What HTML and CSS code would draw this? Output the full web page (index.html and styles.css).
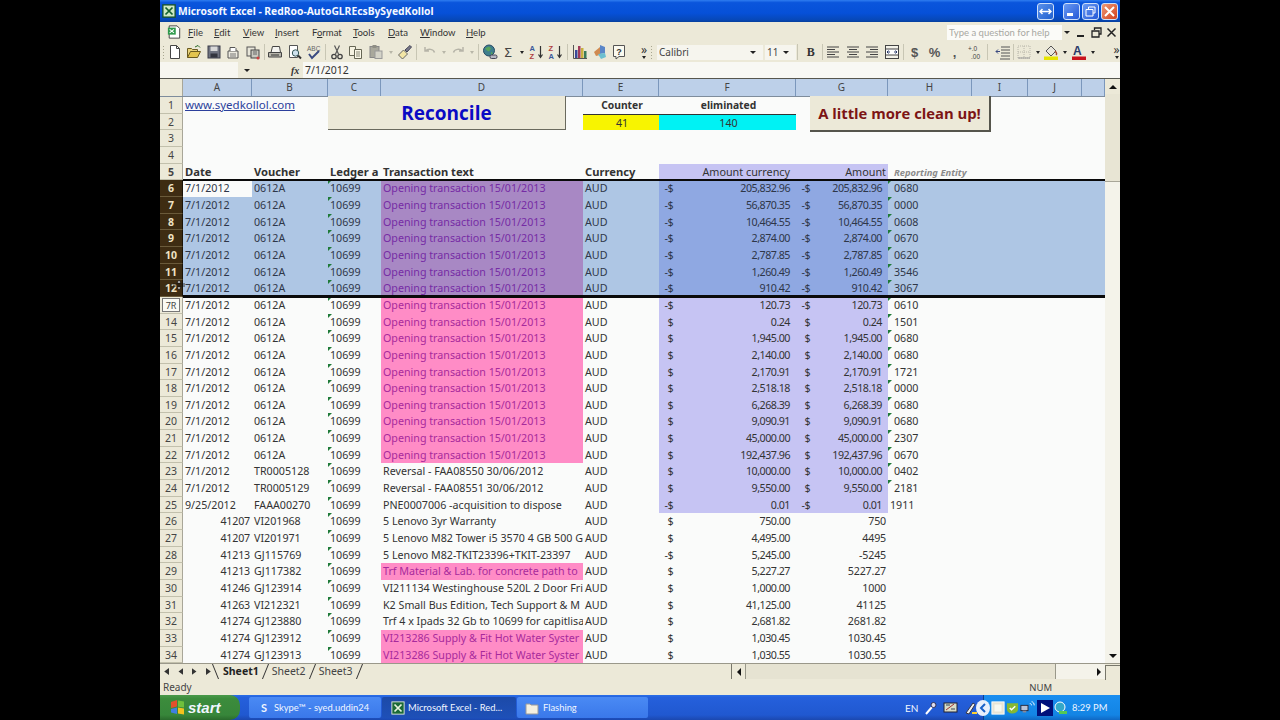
FILE: index.html
```html
<!DOCTYPE html>
<html>
<head>
    <title>Microsoft Excel - RedRoo-AutoGLREcsBySyedKollol</title>
    <link rel="stylesheet" href="styles.css">
</head>
<body>
<svg class="defs" width="0" height="0">
    <symbol id="i-xl" viewBox="0 0 16 16"><rect x="1" y="1" width="14" height="14" fill="#cfe8c4" stroke="#14502a" stroke-width="1.5"/><path d="M4 4l8 8M12 4l-8 8" stroke="#14602e" stroke-width="2"/></symbol>
    <symbol id="i-xl-dark" viewBox="0 0 16 16"><rect x="1" y="1" width="14" height="14" fill="#1b6a38" stroke="#e8f0e0"/><path d="M4 4l8 8M12 4l-8 8" stroke="#e8f4e0" stroke-width="2"/></symbol>
    <symbol id="i-doc" viewBox="0 0 16 16"><path d="M2.5 1h9l3 3v11h-12z" fill="#fff" stroke="#333"/><rect x="1" y="3" width="9" height="8" fill="#2f9a4c"/><path d="M3 5l5 4M8 5L3 9" stroke="#fff" stroke-width="1.3"/></symbol>
    <symbol id="i-new" viewBox="0 0 16 16"><path d="M3.5 1.5h6l3 3v10h-9z" fill="#fff" stroke="#444"/><path d="M9.5 1.5v3h3" fill="none" stroke="#444"/></symbol>
    <symbol id="i-open" viewBox="0 0 16 16"><path d="M1.5 13.5v-9h4l1 1h5v2" fill="#e8d27a" stroke="#6a5a20"/><path d="M1.5 13.5l3-6h10l-3 6z" fill="#e3c44e" stroke="#6a5a20"/><path d="M9 3l3-1.5 2 2" fill="none" stroke="#2a6a2a"/></symbol>
    <symbol id="i-save" viewBox="0 0 16 16"><rect x="2" y="2" width="12" height="12" fill="#6f7380" stroke="#3a3c48"/><rect x="4.5" y="2.5" width="7" height="4.5" fill="#d8d8d8"/><rect x="4.5" y="9.5" width="7" height="4" fill="#33353f"/></symbol>
    <symbol id="i-perm" viewBox="0 0 16 16"><path d="M3 7h10v7H3z" fill="#eceae0" stroke="#555"/><path d="M5 7V3.5h5l1 1V7" fill="#fff" stroke="#555"/><path d="M5 10h6M5 12h6" stroke="#777"/></symbol>
    <symbol id="i-web" viewBox="0 0 16 16"><rect x="2" y="3" width="8" height="9" fill="#e8e6da" stroke="#555"/><rect x="6" y="6" width="8" height="8" fill="#c8c8c0" stroke="#444"/><path d="M8 8h4M8 10h4" stroke="#666"/><circle cx="13" cy="14" r="1.5" fill="#d04040"/></symbol>
    <symbol id="i-print" viewBox="0 0 16 16"><path d="M1.5 8.5h13V13h-13z" fill="#b8b6ac" stroke="#444"/><path d="M4 8.5l1.5-6h7l1 6z" fill="#f4f4f0" stroke="#444"/><path d="M4 11h8" stroke="#333"/></symbol>
    <symbol id="i-prev" viewBox="0 0 16 16"><path d="M2.5 1.5h8v12h-8z" fill="#fff" stroke="#555"/><circle cx="8.5" cy="9" r="3.2" fill="#cfe2ee" stroke="#355"/><path d="M11 11.5l3 3" stroke="#333" stroke-width="2"/></symbol>
    <symbol id="i-cut" viewBox="0 0 16 16"><path d="M5.5 1.5l4 8.5M10.5 1.5l-4 8.5" stroke="#555" stroke-width="1.2"/><circle cx="5" cy="12.5" r="2.2" fill="none" stroke="#444" stroke-width="1.3"/><circle cx="11" cy="12.5" r="2.2" fill="none" stroke="#444" stroke-width="1.3"/></symbol>
    <symbol id="i-copy" viewBox="0 0 16 16"><path d="M1.5 2.5h6v9h-6z" fill="#f6f3e2" stroke="#665"/><path d="M6.5 5.5h7v9h-7z" fill="#fbf8e8" stroke="#665"/><path d="M8 8h4M8 10h4M8 12h4" stroke="#887"/></symbol>
    <symbol id="i-paste" viewBox="0 0 16 16"><rect x="2" y="2.5" width="9" height="11" fill="#a9a89c" stroke="#888"/><rect x="7" y="7" width="7" height="7.5" fill="#d4d3c8" stroke="#999"/><rect x="4.5" y="1" width="4" height="3" fill="#8f8e84"/></symbol>
    <symbol id="i-brush" viewBox="0 0 16 16"><path d="M1.5 11l5-5 4 4-5 5z" fill="#f3e6a6" stroke="#666"/><path d="M8 6l5-4.5L14.5 3 10 8z" fill="#7a7a8c" stroke="#445"/></symbol>
    <symbol id="i-undo" viewBox="0 0 16 16"><path d="M3 3v4h4M3.5 7a5 4 0 0 1 9 1.5" fill="none" stroke="#b6b4a8" stroke-width="1.5"/></symbol>
    <symbol id="i-redo" viewBox="0 0 16 16"><path d="M13 3v4H9M12.5 7a5 4 0 0 0-9 1.5" fill="none" stroke="#b6b4a8" stroke-width="1.5"/></symbol>
    <symbol id="i-link" viewBox="0 0 16 16"><circle cx="7" cy="6.5" r="5.5" fill="#3f7f8c" stroke="#274a66"/><path d="M3 4.5l4-2 2 2-2 3-2-1zM9 8l2 1-2 2z" fill="#5aa65a"/><rect x="8" y="11" width="7" height="3.5" rx="1.5" fill="#b8b8c4" stroke="#445"/></symbol>
    <symbol id="i-chart" viewBox="0 0 16 16"><path d="M1.5 1v13.5H15" fill="none" stroke="#555"/><rect x="3" y="6" width="2.5" height="8" fill="#3a4a9a"/><rect x="6" y="2" width="2.5" height="12" fill="#a03a5a"/><rect x="9" y="4" width="2.5" height="10" fill="#c8b040"/><rect x="12" y="7" width="2.5" height="7" fill="#3a7a5a"/></symbol>
    <symbol id="i-map" viewBox="0 0 16 16"><path d="M8 1l5 2v6l-5 1z" fill="#5a86c8"/><path d="M2 8l6-5v8l-4 1z" fill="#d08a50"/><path d="M6 10l7-1 1 4-5 2z" fill="#6cc0d0"/></symbol>
    <symbol id="i-left" viewBox="0 0 16 16"><path d="M2 3h12M2 5.5h8M2 8h12M2 10.5h8M2 13h12" stroke="#444"/></symbol>
    <symbol id="i-center" viewBox="0 0 16 16"><path d="M2 3h12M4 5.5h8M2 8h12M4 10.5h8M2 13h12" stroke="#444"/></symbol>
    <symbol id="i-right" viewBox="0 0 16 16"><path d="M2 3h12M6 5.5h8M2 8h12M6 10.5h8M2 13h12" stroke="#444"/></symbol>
    <symbol id="i-merge" viewBox="0 0 16 16"><rect x="1.5" y="1.5" width="13" height="13" fill="#f4f3ea" stroke="#444"/><rect x="1.5" y="5" width="13" height="6" fill="#fff" stroke="#444"/><path d="M3 8h3M13 8h-3M4.5 6.5L3 8l1.5 1.5M11.5 6.5L13 8l-1.5 1.5" fill="none" stroke="#2a3a6a"/></symbol>
    <symbol id="i-indent" viewBox="0 0 16 16"><path d="M6 3h9M6 6h9M6 9h9M6 12h9M5 15h10" stroke="#555"/><path d="M1 7.5h4M3 5.5l-2 2 2 2" fill="none" stroke="#3a4a80"/></symbol>
    <symbol id="i-border" viewBox="0 0 16 16"><rect x="2" y="2" width="12" height="12" fill="none" stroke="#b8b6aa" stroke-dasharray="1 1"/><path d="M8 2v12M2 8h12" stroke="#b8b6aa" stroke-dasharray="1 1"/><path d="M2 14h12" stroke="#999"/></symbol>
    <symbol id="i-fill" viewBox="0 0 16 16"><path d="M3 7l5-5 5 5-5 5z" fill="#e8e6dc" stroke="#555"/><path d="M12 7c2 2 2 3 1 4" fill="none" stroke="#a04a30" stroke-width="1.5"/><rect x="1" y="12.5" width="14" height="3.5" fill="#e6e400"/></symbol>
</svg>

<div class="screen">
    <div class="titlebar">
        <svg class="title-icon"><use href="#i-xl"/></svg>
        <span class="title-text">Microsoft Excel - RedRoo-AutoGLREcsBySyedKollol</span>
        <span class="win-btn win-resize"><svg width="13" height="9" viewBox="0 0 13 9"><path d="M1 4.5h11M3.5 2L1 4.5 3.5 7M9.5 2L12 4.5 9.5 7" fill="none" stroke="#fff" stroke-width="1.5"/></svg></span>
        <span class="win-btn win-min"><svg width="11" height="11" viewBox="0 0 11 11"><rect x="1" y="7" width="6" height="3" fill="#fff"/></svg></span>
        <span class="win-btn"><svg width="11" height="11" viewBox="0 0 11 11"><path d="M3.5 3V1H10v6H8M1 3.5h7V10H1z" fill="none" stroke="#fff"/></svg></span>
        <span class="win-btn win-close"><svg width="11" height="11" viewBox="0 0 11 11"><path d="M1 1l9 9M10 1l-9 9" stroke="#fff" stroke-width="2"/></svg></span>
    </div>

    <div class="menubar">
        <svg class="menu-icon"><use href="#i-doc"/></svg>
        <span class="menu m-file"><u>F</u>ile</span>
        <span class="menu m-edit"><u>E</u>dit</span>
        <span class="menu m-view"><u>V</u>iew</span>
        <span class="menu m-insert"><u>I</u>nsert</span>
        <span class="menu m-format">F<u>o</u>rmat</span>
        <span class="menu m-tools"><u>T</u>ools</span>
        <span class="menu m-data"><u>D</u>ata</span>
        <span class="menu m-window"><u>W</u>indow</span>
        <span class="menu m-help"><u>H</u>elp</span>
        <span class="help-box">Type a question for help</span>
        <span class="caret"></span>
        <span class="doc-btns">
            <svg width="11" height="11" viewBox="0 0 11 11"><rect x="1" y="8" width="7" height="2" fill="#222"/></svg>
            <svg width="11" height="11" viewBox="0 0 11 11"><path d="M3.5 3V1H10v6H8M1 4h7v6H1z" fill="none" stroke="#222" stroke-width="1.3"/></svg>
            <svg width="11" height="11" viewBox="0 0 11 11"><path d="M1.5 1.5l8 8M9.5 1.5l-8 8" stroke="#222" stroke-width="1.5"/></svg>
        </span>
    </div>

    <div class="toolbar">
        <span class="grip"></span>
        <span class="tb"><svg><use href="#i-new"/></svg></span>
        <span class="tb"><svg><use href="#i-open"/></svg></span>
        <span class="tb"><svg><use href="#i-save"/></svg></span>
        <span class="tb"><svg><use href="#i-perm"/></svg></span>
        <span class="tb"><svg><use href="#i-web"/></svg></span>
        <span class="sep"></span>
        <span class="tb"><svg><use href="#i-print"/></svg></span>
        <span class="tb"><svg><use href="#i-prev"/></svg></span>
        <span class="tb"><svg viewBox="0 0 16 16"><text x="1" y="6.5" font-size="6.5" font-family="Liberation Sans" fill="#666">ABC</text><path d="M3 10l3 4 7-7" fill="none" stroke="#3a4a80" stroke-width="2"/></svg></span>
        <span class="sep"></span>
        <span class="tb"><svg><use href="#i-cut"/></svg></span>
        <span class="tb"><svg><use href="#i-copy"/></svg></span>
        <span class="tb"><svg><use href="#i-paste"/></svg></span>
        <span class="dd dd-off"></span>
        <span class="tb"><svg><use href="#i-brush"/></svg></span>
        <span class="sep"></span>
        <span class="tb tb-sm tb-undo"><svg><use href="#i-undo"/></svg></span>
        <span class="dd dd-off"></span>
        <span class="tb tb-sm"><svg><use href="#i-redo"/></svg></span>
        <span class="dd dd-off"></span>
        <span class="sep"></span>
        <span class="tb"><svg><use href="#i-link"/></svg></span>
        <span class="tb sigma">Σ</span>
        <span class="dd"></span>
        <span class="tb"><svg viewBox="0 0 16 16"><text x="0.5" y="7" font-size="7.5" font-weight="bold" font-family="Liberation Sans" fill="#3a5a9a">A</text><text x="0.5" y="15" font-size="7.5" font-weight="bold" font-family="Liberation Sans" fill="#b04040">Z</text><path d="M11.5 2v11M9.5 10.5l2 3 2-3" fill="none" stroke="#333" stroke-width="1.2"/></svg></span>
        <span class="tb"><svg viewBox="0 0 16 16"><text x="0.5" y="7" font-size="7.5" font-weight="bold" font-family="Liberation Sans" fill="#b04040">Z</text><text x="0.5" y="15" font-size="7.5" font-weight="bold" font-family="Liberation Sans" fill="#3a5a9a">A</text><path d="M11.5 2v11M9.5 10.5l2 3 2-3" fill="none" stroke="#333" stroke-width="1.2"/></svg></span>
        <span class="sep"></span>
        <span class="tb tb-wide"><svg><use href="#i-chart"/></svg></span>
        <span class="tb"><svg><use href="#i-map"/></svg></span>
        <span class="tb"><svg viewBox="0 0 16 16"><path d="M2.5 1.5h11v11H8l-3 2.5v-2.5H2.5z" fill="#fbfaf0" stroke="#555"/><text x="5.3" y="10.5" font-size="9" font-weight="bold" font-family="Liberation Sans" fill="#333">?</text></svg></span>
        <span class="more">»</span>
        <span class="grip"></span>
        <span class="combo combo-font">Calibri<i class="caret"></i></span>
        <span class="combo combo-size">11<i class="caret"></i></span>
        <span class="sep sep-b"></span>
        <span class="tb bold-b">B</span>
        <span class="sep"></span>
        <span class="tb"><svg><use href="#i-left"/></svg></span>
        <span class="tb"><svg><use href="#i-center"/></svg></span>
        <span class="tb"><svg><use href="#i-right"/></svg></span>
        <span class="tb"><svg><use href="#i-merge"/></svg></span>
        <span class="sep"></span>
        <span class="tb sym">$</span>
        <span class="tb sym">%</span>
        <span class="tb sym">,</span>
        <span class="tb tb-dec"><svg viewBox="0 0 16 16"><text x="0" y="7" font-size="6.5" font-family="Liberation Sans" fill="#444">+.0</text><text x="3" y="15" font-size="6.5" font-family="Liberation Sans" fill="#444">.00</text></svg></span>
        <span class="sep"></span>
        <span class="tb tb-indent"><svg><use href="#i-indent"/></svg></span>
        <span class="sep sep-tight"></span>
        <span class="tb"><svg><use href="#i-border"/></svg></span>
        <span class="dd dd-n"></span>
        <span class="tb"><svg><use href="#i-fill"/></svg></span>
        <span class="dd dd-n"></span>
        <span class="tb"><svg viewBox="0 0 16 16"><text x="2" y="11" font-size="12" font-weight="bold" font-family="Liberation Sans" fill="#2a3a6a">A</text><rect x="1" y="12.5" width="14" height="3.5" fill="#c8141e"/></svg></span>
        <span class="dd dd-n"></span>
        <span class="more more-end">»</span>
    </div>

    <div class="formula">
        <span class="name-box"></span>
        <span class="caret name-caret"></span>
        <span class="fx">fx</span>
        <span class="formula-text">7/1/2012</span>
    </div>

    <div class="sheet-wrap">
        <div class="sheet">
            <div class="cols">
                <div class="corner"></div><div>A</div><div>B</div><div>C</div><div>D</div><div>E</div><div>F</div><div>G</div><div>H</div><div>I</div><div>J</div><div></div>
            </div>

            <div class="row"><div class="rh">1</div><div class="link-cell"><a>www.syedkollol.com</a></div><div></div><div></div><div class="mid strong">Counter</div><div class="mid strong">eliminated</div></div>
            <div class="row"><div class="rh">2</div><div></div><div></div><div></div><div></div><div class="mid yellow">41</div><div class="mid cyan">140</div></div>
            <div class="row"><div class="rh">3</div></div>
            <div class="row"><div class="rh">4</div></div>
            <div class="row head line"><div class="rh">5</div><div>Date</div><div>Voucher</div><div>Ledger a</div><div>Transaction text</div><div>Currency</div><div class="num-head shade">Amount currency</div><div class="num-head shade">Amount</div><div class="entity-head">Reporting Entity</div></div>

            <div class="row sel"><div class="rh">6</div><div class="active">7/1/2012</div><div>0612A</div><div class="err">10699</div><div class="pink">Opening transaction 15/01/2013</div><div>AUD</div><div class="amt shade"><span>-$</span><span>205,832.96</span></div><div class="amt shade"><span>-$</span><span>205,832.96</span></div><div class="err ent">0680</div></div>
            <div class="row sel"><div class="rh">7</div><div>7/1/2012</div><div>0612A</div><div class="err">10699</div><div class="pink">Opening transaction 15/01/2013</div><div>AUD</div><div class="amt shade"><span>-$</span><span>56,870.35</span></div><div class="amt shade"><span>-$</span><span>56,870.35</span></div><div class="err ent">0000</div></div>
            <div class="row sel"><div class="rh">8</div><div>7/1/2012</div><div>0612A</div><div class="err">10699</div><div class="pink">Opening transaction 15/01/2013</div><div>AUD</div><div class="amt shade"><span>-$</span><span>10,464.55</span></div><div class="amt shade"><span>-$</span><span>10,464.55</span></div><div class="err ent">0608</div></div>
            <div class="row sel"><div class="rh">9</div><div>7/1/2012</div><div>0612A</div><div class="err">10699</div><div class="pink">Opening transaction 15/01/2013</div><div>AUD</div><div class="amt shade"><span>-$</span><span>2,874.00</span></div><div class="amt shade"><span>-$</span><span>2,874.00</span></div><div class="err ent">0670</div></div>
            <div class="row sel"><div class="rh">10</div><div>7/1/2012</div><div>0612A</div><div class="err">10699</div><div class="pink">Opening transaction 15/01/2013</div><div>AUD</div><div class="amt shade"><span>-$</span><span>2,787.85</span></div><div class="amt shade"><span>-$</span><span>2,787.85</span></div><div class="err ent">0620</div></div>
            <div class="row sel"><div class="rh">11</div><div>7/1/2012</div><div>0612A</div><div class="err">10699</div><div class="pink">Opening transaction 15/01/2013</div><div>AUD</div><div class="amt shade"><span>-$</span><span>1,260.49</span></div><div class="amt shade"><span>-$</span><span>1,260.49</span></div><div class="err ent">3546</div></div>
            <div class="row sel line line-thick"><div class="rh">12</div><div>7/1/2012</div><div>0612A</div><div class="err">10699</div><div class="pink">Opening transaction 15/01/2013</div><div>AUD</div><div class="amt shade"><span>-$</span><span>910.42</span></div><div class="amt shade"><span>-$</span><span>910.42</span></div><div class="err ent">3067</div></div>

            <div class="row"><div class="rh"><span class="tip">7R</span></div><div>7/1/2012</div><div>0612A</div><div class="err">10699</div><div class="pink">Opening transaction 15/01/2013</div><div>AUD</div><div class="amt shade"><span>-$</span><span>120.73</span></div><div class="amt shade"><span>-$</span><span>120.73</span></div><div class="err ent">0610</div></div>
            <div class="row"><div class="rh">14</div><div>7/1/2012</div><div>0612A</div><div class="err">10699</div><div class="pink">Opening transaction 15/01/2013</div><div>AUD</div><div class="amt shade"><span>$</span><span>0.24</span></div><div class="amt shade"><span>$</span><span>0.24</span></div><div class="err ent">1501</div></div>
            <div class="row"><div class="rh">15</div><div>7/1/2012</div><div>0612A</div><div class="err">10699</div><div class="pink">Opening transaction 15/01/2013</div><div>AUD</div><div class="amt shade"><span>$</span><span>1,945.00</span></div><div class="amt shade"><span>$</span><span>1,945.00</span></div><div class="err ent">0680</div></div>
            <div class="row"><div class="rh">16</div><div>7/1/2012</div><div>0612A</div><div class="err">10699</div><div class="pink">Opening transaction 15/01/2013</div><div>AUD</div><div class="amt shade"><span>$</span><span>2,140.00</span></div><div class="amt shade"><span>$</span><span>2,140.00</span></div><div class="err ent">0680</div></div>
            <div class="row"><div class="rh">17</div><div>7/1/2012</div><div>0612A</div><div class="err">10699</div><div class="pink">Opening transaction 15/01/2013</div><div>AUD</div><div class="amt shade"><span>$</span><span>2,170.91</span></div><div class="amt shade"><span>$</span><span>2,170.91</span></div><div class="err ent">1721</div></div>
            <div class="row"><div class="rh">18</div><div>7/1/2012</div><div>0612A</div><div class="err">10699</div><div class="pink">Opening transaction 15/01/2013</div><div>AUD</div><div class="amt shade"><span>$</span><span>2,518.18</span></div><div class="amt shade"><span>$</span><span>2,518.18</span></div><div class="err ent">0000</div></div>
            <div class="row"><div class="rh">19</div><div>7/1/2012</div><div>0612A</div><div class="err">10699</div><div class="pink">Opening transaction 15/01/2013</div><div>AUD</div><div class="amt shade"><span>$</span><span>6,268.39</span></div><div class="amt shade"><span>$</span><span>6,268.39</span></div><div class="err ent">0680</div></div>
            <div class="row"><div class="rh">20</div><div>7/1/2012</div><div>0612A</div><div class="err">10699</div><div class="pink">Opening transaction 15/01/2013</div><div>AUD</div><div class="amt shade"><span>$</span><span>9,090.91</span></div><div class="amt shade"><span>$</span><span>9,090.91</span></div><div class="err ent">0680</div></div>
            <div class="row"><div class="rh">21</div><div>7/1/2012</div><div>0612A</div><div class="err">10699</div><div class="pink">Opening transaction 15/01/2013</div><div>AUD</div><div class="amt shade"><span>$</span><span>45,000.00</span></div><div class="amt shade"><span>$</span><span>45,000.00</span></div><div class="err ent">2307</div></div>
            <div class="row"><div class="rh">22</div><div>7/1/2012</div><div>0612A</div><div class="err">10699</div><div class="pink">Opening transaction 15/01/2013</div><div>AUD</div><div class="amt shade"><span>$</span><span>192,437.96</span></div><div class="amt shade"><span>$</span><span>192,437.96</span></div><div class="err ent">0670</div></div>
            <div class="row"><div class="rh">23</div><div>7/1/2012</div><div>TR0005128</div><div class="err">10699</div><div>Reversal - FAA08550 30/06/2012</div><div>AUD</div><div class="amt shade"><span>$</span><span>10,000.00</span></div><div class="amt shade"><span>$</span><span>10,000.00</span></div><div class="err ent">0402</div></div>
            <div class="row"><div class="rh">24</div><div>7/1/2012</div><div>TR0005129</div><div class="err">10699</div><div>Reversal - FAA08551 30/06/2012</div><div>AUD</div><div class="amt shade"><span>$</span><span>9,550.00</span></div><div class="amt shade"><span>$</span><span>9,550.00</span></div><div class="err ent">2181</div></div>
            <div class="row"><div class="rh">25</div><div>9/25/2012</div><div>FAAA00270</div><div class="err">10699</div><div>PNE0007006 -acquisition to dispose</div><div>AUD</div><div class="amt shade"><span>-$</span><span>0.01</span></div><div class="amt shade"><span>-$</span><span>0.01</span></div><div>1911</div></div>

            <div class="row"><div class="rh">26</div><div class="right">41207</div><div>VI201968</div><div class="err">10699</div><div>5 Lenovo 3yr Warranty</div><div>AUD</div><div class="amt"><span>$</span><span>750.00</span></div><div class="right">750</div></div>
            <div class="row"><div class="rh">27</div><div class="right">41207</div><div>VI201971</div><div class="err">10699</div><div>5 Lenovo M82 Tower i5 3570 4 GB 500 GI</div><div>AUD</div><div class="amt"><span>$</span><span>4,495.00</span></div><div class="right">4495</div></div>
            <div class="row"><div class="rh">28</div><div class="right">41213</div><div>GJ115769</div><div class="err">10699</div><div>5 Lenovo M82-TKIT23396+TKIT-23397</div><div>AUD</div><div class="amt"><span>-$</span><span>5,245.00</span></div><div class="right">-5245</div></div>
            <div class="row"><div class="rh">29</div><div class="right">41213</div><div>GJ117382</div><div class="err">10699</div><div class="pink">Trf Material &amp; Lab. for concrete path to</div><div>AUD</div><div class="amt"><span>$</span><span>5,227.27</span></div><div class="right">5227.27</div></div>
            <div class="row"><div class="rh">30</div><div class="right">41246</div><div>GJ123914</div><div class="err">10699</div><div>VI211134 Westinghouse 520L 2 Door Fri</div><div>AUD</div><div class="amt"><span>$</span><span>1,000.00</span></div><div class="right">1000</div></div>
            <div class="row"><div class="rh">31</div><div class="right">41263</div><div>VI212321</div><div class="err">10699</div><div>K2 Small Bus Edition, Tech Support &amp; M</div><div>AUD</div><div class="amt"><span>$</span><span>41,125.00</span></div><div class="right">41125</div></div>
            <div class="row"><div class="rh">32</div><div class="right">41274</div><div>GJ123880</div><div class="err">10699</div><div>Trf 4 x Ipads 32 Gb to 10699 for capitlisa</div><div>AUD</div><div class="amt"><span>$</span><span>2,681.82</span></div><div class="right">2681.82</div></div>
            <div class="row"><div class="rh">33</div><div class="right">41274</div><div>GJ123912</div><div class="err">10699</div><div class="pink">VI213286 Supply &amp; Fit Hot Water Syster</div><div>AUD</div><div class="amt"><span>$</span><span>1,030.45</span></div><div class="right">1030.45</div></div>
            <div class="row"><div class="rh">34</div><div class="right">41274</div><div>GJ123913</div><div class="err">10699</div><div class="pink">VI213286 Supply &amp; Fit Hot Water Syster</div><div>AUD</div><div class="amt"><span>$</span><span>1,030.55</span></div><div class="right">1030.55</div></div>

            <button class="sheet-btn btn-reconcile">Reconcile</button>
            <button class="sheet-btn btn-clean">A little more clean up!</button>
            <svg class="row-cursor" width="14" height="12" viewBox="0 0 14 12"><path d="M1 5h12M1 7h12M7 1L5 4h4zM7 11L5 8h4z" fill="#fff" stroke="#111" stroke-width="0.8"/></svg>
        </div>

        <div class="vscroll">
            <span class="sb-btn"><i class="arrow-up"></i></span>
            <span class="sb-thumb"></span>
            <span class="sb-track"></span>
            <span class="sb-btn sb-btn-low"><i class="arrow-down"></i></span>
        </div>
    </div>

    <div class="tabbar">
        <div class="tab-nav">
            <i class="nav nav-first"></i><i class="nav nav-prev"></i><i class="nav nav-next"></i><i class="nav nav-last"></i>
        </div>
        <div class="tabs">
            <span class="tab tab-on">Sheet1</span>
            <span class="tab">Sheet2</span>
            <span class="tab">Sheet3</span>
        </div>
        <div class="hscroll">
            <span class="hs-btn"><i class="arrow-left"></i></span>
            <span class="hs-thumb"></span>
            <span class="hs-track"></span>
            <span class="hs-end"><i class="arrow-right"></i></span>
        </div>
        <span class="size-corner"></span>
    </div>

    <div class="status">
        <span>Ready</span>
        <span class="status-num">NUM</span>
    </div>

    <div class="taskbar">
        <div class="start">
            <svg width="17" height="17" viewBox="0 0 17 17"><path d="M2 3l6-2v6.5L2 9z" fill="#e2502c"/><path d="M9 1.5l6 1v6l-6-.8z" fill="#6fc03c"/><path d="M2 10l6-1.5V15l-6-1.5z" fill="#3f7fe0"/><path d="M9 8.5l6 1v6l-6-1z" fill="#f2c21e"/></svg>
            <span>start</span>
        </div>
        <div class="task"><b class="skype-s">S</b><span>Skype™ - syed.uddin24</span></div>
        <div class="task task-on"><svg width="14" height="14"><use href="#i-xl-dark"/></svg><span>Microsoft Excel - Red...</span></div>
        <div class="task task-last"><svg width="14" height="14" viewBox="0 0 14 14"><path d="M1 3h4l1 1h7v9H1z" fill="#f4f0e0" stroke="#9a9a9a"/></svg><span>Flashing</span></div>
        <div class="lang">EN</div>
        <div class="tray-out">
            <svg width="13" height="14" viewBox="0 0 13 14"><path d="M2 13l6-7" stroke="#fff" stroke-width="2"/><circle cx="9.5" cy="4" r="2.5" fill="#dde" stroke="#335"/></svg>
            <svg width="15" height="14" viewBox="0 0 15 14"><rect x="1" y="2" width="13" height="9" fill="#d8dcc8" stroke="#223"/><path d="M3 9l8-6" stroke="#a03030"/><path d="M3 4h4M8 8h4" stroke="#345"/></svg>
            <svg width="14" height="14" viewBox="0 0 14 14"><path d="M2 12L9 2l2 1.5L5 13z" fill="#eee" stroke="#334"/><path d="M8 12h5" stroke="#ffd030" stroke-width="2"/></svg>
        </div>
        <div class="tray">
            <span class="tray-back"><svg width="8" height="10" viewBox="0 0 8 10"><path d="M6 1L2 5l4 4" fill="none" stroke="#1a62c8" stroke-width="2"/></svg></span>
            <svg width="14" height="16" viewBox="0 0 16 16"><rect x="1" y="1" width="14" height="14" fill="#e8e4d4" stroke="#fff"/><path d="M4 4h8v8H4z" fill="#f8f8f0"/></svg>
            <svg width="13" height="14" viewBox="0 0 14 14"><path d="M1 2h12v6c0 3-3 5-6 5s-6-2-6-5z" fill="#86b832"/><path d="M4 7l2 2 4-4" fill="none" stroke="#fff" stroke-width="1.5"/></svg>
            <svg width="16" height="14" viewBox="0 0 18 14"><rect x="1" y="4" width="8" height="6" fill="#b8c4d8" stroke="#223"/><rect x="3" y="10" width="4" height="2" fill="#889"/><path d="M11 2c1.5 0 2 1 2 2M13 0c2 0 3 2 3 4" fill="none" stroke="#fff"/></svg>
            <svg width="16" height="16" viewBox="0 0 16 16"><rect width="16" height="16" fill="#00107a"/><path d="M4 3l9 5-9 5z" fill="#fff"/></svg>
            <svg width="14" height="14" viewBox="0 0 14 14"><circle cx="6" cy="6" r="5" fill="#34a8c8" stroke="#fff"/><rect x="5" y="10" width="8" height="3" fill="#54c854"/></svg>
            <span class="clock">8:29 PM</span>
        </div>
    </div>
</div>
</body>
</html>
```

FILE: styles.css
```css
body {
    margin: 0;
    background-color: #000;
    font-family: "Noto Sans", sans-serif;
    color: #333;
}

.defs {
    position: absolute;
}

.screen {
    width: 960px;
    height: 720px;
    margin: 0 auto;
    display: flex;
    flex-direction: column;
    overflow: hidden;
    background-color: #ece9d8;
}

/* title bar */
.titlebar {
    height: 22px;
    flex: none;
    display: flex;
    align-items: center;
    padding: 0 2px;
    box-sizing: border-box;
    background: linear-gradient(#2f7df0 0, #0a55dc 12%, #0650d8 60%, #0748b8 90%, #063f9c 100%);
}

.title-icon {
    width: 14px;
    height: 14px;
}

.title-text {
    margin-left: 2px;
    flex: 1;
    color: #f4f8ff;
    font: bold 10.3px "Noto Sans", sans-serif;
    white-space: nowrap;
}

.win-btn {
    width: 17px;
    height: 17px;
    margin-left: 2px;
    display: flex;
    align-items: center;
    justify-content: center;
    border: 1px solid #cfe0fa;
    border-radius: 3px;
    box-sizing: border-box;
    background: linear-gradient(135deg, #6a9af2, #2458d8);
}

.win-resize {
    margin-right: 7px;
    background: linear-gradient(135deg, #5a90ea, #1f60d0);
}

.win-close {
    background: linear-gradient(135deg, #ee9a78, #d2401c);
}

/* menu */
.menubar {
    height: 20px;
    flex: none;
    display: flex;
    align-items: center;
    font: 9.5px Lato, sans-serif;
    color: #333;
}

.menu-icon {
    width: 14px;
    height: 14px;
    margin: 0 7px;
}

.menu {
    flex: none;
}

.m-file { width: 26px; }
.m-edit { width: 29px; }
.m-view { width: 32px; }
.m-insert { width: 37px; }
.m-format { width: 41px; }
.m-tools { width: 35px; }
.m-data { width: 32px; }
.m-window { width: 46px; }

.help-box {
    margin-left: auto;
    width: 115px;
    height: 15px;
    line-height: 15px;
    padding-left: 2px;
    box-sizing: border-box;
    background-color: #fbfbf8;
    color: #a8a8a2;
    white-space: nowrap;
    overflow: hidden;
}

.caret {
    display: inline-block;
    width: 0;
    height: 0;
    border-left: 3px solid transparent;
    border-right: 3px solid transparent;
    border-top: 3px solid #222;
}

.menubar > .caret {
    margin-left: 2px;
}

.doc-btns {
    margin: 0 3px 0 6px;
    display: flex;
    gap: 4px;
}

/* toolbar */
.toolbar {
    height: 20px;
    flex: none;
    display: flex;
    align-items: center;
    padding-left: 2px;
}

.grip {
    width: 3px;
    height: 14px;
    flex: none;
    background-image: radial-gradient(#a8a690 1px, transparent 1px);
    background-size: 3px 3px;
}

.tb {
    width: 19.5px;
    height: 20px;
    flex: none;
    display: flex;
    align-items: center;
    justify-content: center;
}

.tb svg {
    width: 16px;
    height: 16px;
}

.tb-sm {
    width: 18px;
}

.tb-undo {
    margin-left: 3px;
}

.tb-wide {
    width: 21px;
}

.tb-dec {
    margin-left: 2px;
}

.tb-indent {
    margin-left: 4.5px;
}

.sep {
    width: 1px;
    height: 16px;
    flex: none;
    margin: 0 1px;
    background-color: #c8c6b4;
}

.sep-b {
    margin-right: 3px;
}

.sep-tight {
    margin-left: 0;
    margin-right: 0;
}

.dd {
    width: 10px;
    flex: none;
    display: flex;
    justify-content: center;
}

.dd-n {
    width: 8px;
}

.dd::after {
    content: "";
    border-left: 2.5px solid transparent;
    border-right: 2.5px solid transparent;
    border-top: 3px solid #222;
}

.dd-off::after {
    border-top-color: #b8b6a8;
}

.sigma {
    width: 17.5px;
    font-size: 13px;
    color: #444;
}

.more {
    width: 12px;
    margin: 0 0 0 9px;
    flex: none;
    display: flex;
    flex-direction: column;
    align-items: center;
    font-size: 12px;
    line-height: 10px;
    color: #333;
}

.more::after {
    content: "";
    margin-top: 1px;
    border-left: 2.5px solid transparent;
    border-right: 2.5px solid transparent;
    border-top: 3px solid #222;
}

.more-end {
    margin: 0 0 0 14px;
}

.combo {
    height: 15px;
    flex: none;
    display: flex;
    align-items: center;
    justify-content: space-between;
    padding: 0 7px 0 2px;
    margin-left: 2px;
    box-sizing: border-box;
    background-color: #f6f5ee;
    font-size: 10px;
    color: #444;
}

.combo-font {
    width: 106px;
    margin-left: 4px;
}

.combo-size {
    width: 31px;
}

.bold-b {
    font: bold 12px "Liberation Serif", serif;
    color: #333;
}

.sym {
    width: 20px;
    font: bold 13px "Liberation Sans", sans-serif;
    color: #555;
}

/* formula bar */
.formula {
    height: 16px;
    flex: none;
    display: flex;
    align-items: center;
    background: linear-gradient(90deg, #ece9d8 143px, #f8f8f4 143px);
    font-size: 11px;
}

.name-box {
    width: 78px;
    height: 16px;
    background-color: #f7f6f0;
}

.name-caret {
    margin-left: 6px;
}

.fx {
    margin-left: 41px;
    width: 14px;
    font: italic bold 10px "Liberation Serif", serif;
    color: #333;
}

.formula-text {
    color: #333;
    font-size: 10.5px;
}

/* grid */
.sheet-wrap {
    flex: 1;
    min-height: 0;
    display: flex;
}

.sheet {
    flex: 1;
    position: relative;
    overflow: hidden;
    background-color: #fafbfa;
}

.cols,
.row {
    display: grid;
    grid-template-columns: 23px 69px 76px 53px 202px 76px 137px 92px 84px 56px 54px 23px;
}

.cols {
    height: 19px;
    box-sizing: border-box;
    border-top: 1px solid #56564e;
    border-bottom: 1px solid #7e8c9c;
    background-color: #bdd0e9;
    font-size: 10px;
    color: #444;
}

.cols > div {
    text-align: center;
    line-height: 17px;
    border-right: 1px solid #7b97bc;
    box-sizing: border-box;
}

.cols > .corner {
    background-color: #ece9d8;
    border-right: 1px solid #a8a698;
}

.row {
    position: relative;
    height: 16.66px;
    font-size: 10.7px;
    line-height: 16.66px;
    white-space: nowrap;
}

.row > div {
    padding-left: 2px;
    overflow: hidden;
    box-sizing: border-box;
}

.row > .rh {
    padding: 0;
    text-align: center;
    font-size: 10.5px;
    background-color: #ece9d8;
    border-right: 1px solid #a8a698;
    border-bottom: 1px solid #c2c0ac;
    color: #444;
}

.tip {
    display: block;
    margin: 1px 2px;
    height: 14px;
    line-height: 13px;
    box-sizing: border-box;
    border: 1px solid #777;
    background-color: #fbfbf4;
    font-size: 9px;
}

.link-cell {
    grid-column: span 2;
    font-size: 11.5px;
}

.link-cell a {
    color: #2c3f9c;
    text-decoration: underline;
}

.mid {
    text-align: center;
}

.strong {
    font-weight: bold;
    font-size: 10.3px;
}

.yellow {
    background-color: #f8f400;
    border-top: 1px solid #333;
}

.cyan {
    background-color: #00f2f4;
    border-top: 1px solid #333;
}

.head {
    font-weight: bold;
    font-size: 11.2px;
}

.head > .num-head {
    text-align: right;
    padding: 0 6px 0 0;
    font-size: 10.8px;
    font-weight: normal;
}

.head > .num-head + .num-head {
    padding-right: 2px;
}

.head > .entity-head {
    padding-left: 6px;
    font: italic bold 9.4px "Noto Sans", sans-serif;
    line-height: 17px;
    color: #8a8a8a;
}

.line::after {
    content: "";
    position: absolute;
    left: 23px;
    right: 0;
    bottom: -1px;
    height: 2px;
    background-color: #0a0a0a;
    z-index: 1;
}

.line-thick::after {
    height: 3px;
}

.right {
    text-align: right;
    letter-spacing: -0.2px;
}

.row > .right {
    padding-right: 2px;
}

.pink {
    background-color: #ff8cc6;
    color: #a82a9c;
}

.shade {
    background-color: #c6c4f3;
}

.amt {
    display: flex;
    justify-content: space-between;
    letter-spacing: -0.5px;
}

.row > .amt {
    padding: 0 6px 0 0;
}

.amt span:first-child {
    width: 14px;
    text-align: right;
}

.err {
    position: relative;
}

.err::before {
    content: "";
    position: absolute;
    left: 0;
    top: 0;
    border-top: 4px solid #1e7a38;
    border-right: 4px solid transparent;
}

.row > .ent {
    padding-left: 6px;
}

/* selected rows 6 - 12 */
.sel {
    background-color: #aec6e4;
    color: #2e3648;
}

.sel > .rh {
    background-color: #3e2c12;
    border-right: 1px solid #1c1408;
    border-bottom: 1px solid #6a5a3a;
    color: #efe2c4;
    font-weight: bold;
}

.sel > .pink {
    background-color: #a888c4;
    color: #762ca4;
}

.sel > .shade {
    background-color: #8fa8e2;
}

.sel > .active {
    background-color: #fafbfa;
}

/* the two macro buttons sit over the cells */
.sheet-btn {
    position: absolute;
    padding: 0;
    box-sizing: border-box;
    border: 0;
    border-right: 1px solid #6a6a5e;
    border-bottom: 1px solid #6a6a5e;
    background-color: #ece9d8;
    font-family: "Open Sans", sans-serif;
    font-weight: bold;
}

.btn-reconcile {
    left: 168px;
    top: 18px;
    width: 238px;
    height: 34px;
    font-size: 19px;
    color: #0a0ac4;
}

.btn-clean {
    left: 650px;
    top: 18px;
    width: 181px;
    height: 36px;
    font-size: 14.8px;
    color: #7c1414;
    border-right: 2px solid #55554c;
    border-bottom: 2px solid #55554c;
}

.row-cursor {
    position: absolute;
    left: 12px;
    top: 201px;
}

/* scrollbars */
.vscroll {
    width: 15px;
    flex: none;
    display: flex;
    flex-direction: column;
    border-top: 1px solid #56564e;
    box-sizing: border-box;
    background-color: #f4f3ea;
}

.sb-btn {
    height: 15px;
    flex: none;
    display: flex;
    align-items: center;
    justify-content: center;
    background-color: #ece9d8;
}

.sb-btn-low {
    background-color: #f4f3ea;
}

.sb-thumb {
    height: 88px;
    flex: none;
    background-color: #e8e5d4;
    border-bottom: 1px solid #a8a698;
    box-sizing: border-box;
}

.sb-track {
    flex: 1;
}

.arrow-up {
    border-left: 4px solid transparent;
    border-right: 4px solid transparent;
    border-bottom: 4px solid #111;
}

.arrow-down {
    border-left: 4px solid transparent;
    border-right: 4px solid transparent;
    border-top: 4px solid #111;
}

.arrow-left {
    border-top: 4px solid transparent;
    border-bottom: 4px solid transparent;
    border-right: 4px solid #111;
}

.arrow-right {
    border-top: 4px solid transparent;
    border-bottom: 4px solid transparent;
    border-left: 4px solid #111;
}

/* sheet tabs */
.tabbar {
    height: 16px;
    flex: none;
    display: flex;
    align-items: center;
    box-sizing: border-box;
    border-top: 1px solid #9a988a;
}

.tab-nav {
    width: 55px;
    flex: none;
    display: flex;
    justify-content: space-between;
    padding: 0 3px;
    box-sizing: border-box;
}

.nav {
    width: 6px;
    height: 7px;
    background-color: #333;
}

.nav-first,
.nav-prev {
    clip-path: polygon(100% 0, 100% 100%, 20% 50%);
}

.nav-next,
.nav-last {
    clip-path: polygon(0 0, 0 100%, 80% 50%);
}

.tabs {
    display: flex;
    width: 516px;
    flex: none;
    font-size: 10.5px;
    color: #444;
}

.tab {
    position: relative;
    padding: 0 6px;
    margin-right: 1px;
    line-height: 15px;
}

.tab::after,
.tab-on::before {
    content: "";
    position: absolute;
    top: 0;
    bottom: 0;
    width: 1px;
    background-color: #333;
}

.tab::after {
    right: -1px;
    transform: skewX(-22deg);
}

.tab-on::before {
    left: -2px;
    transform: skewX(22deg);
}

.tab-on {
    font-weight: bold;
    color: #222;
    margin-left: 2px;
}

.hscroll {
    flex: 1;
    height: 15px;
    display: flex;
    align-items: center;
}

.hs-btn {
    width: 15px;
    height: 15px;
    flex: none;
    display: flex;
    align-items: center;
    justify-content: center;
    box-sizing: border-box;
    border-left: 1px solid #77766a;
    border-right: 1px solid #99988a;
}

.hs-thumb {
    width: 310px;
    height: 15px;
    flex: none;
    box-sizing: border-box;
    border-right: 1px solid #99988a;
    background-color: #e6e3d2;
}

.hs-track {
    flex: 1;
    height: 15px;
    background-color: #f4f3ea;
}

.hs-end {
    width: 13px;
    height: 15px;
    flex: none;
    display: flex;
    align-items: center;
    justify-content: center;
    background-color: #f4f3ea;
}

.size-corner {
    width: 15px;
    height: 15px;
    flex: none;
    box-sizing: border-box;
    border-left: 1px solid #77766a;
    border-top: 1px solid #77766a;
    margin-top: 1px;
}

/* status bar */
.status {
    height: 16px;
    flex: none;
    display: flex;
    align-items: center;
    padding-left: 3px;
    font-size: 10px;
    color: #444;
}

.status-num {
    margin-left: auto;
    margin-right: 68px;
    font-size: 9.5px;
}

/* task bar */
.taskbar {
    height: 25px;
    flex: none;
    display: flex;
    align-items: center;
    background: linear-gradient(#2a6fe8 0, #2560dc 10%, #2058d0 80%, #1b48b0 100%);
    color: #f0f6ff;
    font: 9.4px Lato, sans-serif;
}

.start {
    width: 80px;
    height: 25px;
    flex: none;
    display: flex;
    align-items: center;
    gap: 2px;
    padding-left: 9px;
    box-sizing: border-box;
    border-radius: 0 10px 10px 0;
    background: linear-gradient(#4a9a4a 0, #3c8c3c 15%, #37863a 80%, #2a6a2c 100%);
    font: italic bold 15px "Liberation Sans", sans-serif;
}

.task {
    height: 21px;
    flex: none;
    display: flex;
    align-items: center;
    gap: 3px;
    width: 132px;
    margin-left: 1px;
    padding-left: 8px;
    box-sizing: border-box;
    border-radius: 2px;
    background: linear-gradient(#4a8af4, #3a78ea);
    white-space: nowrap;
}

.task:nth-child(2) {
    margin-left: 9px;
}

.task-on {
    width: 134px;
    padding-left: 9px;
    background: linear-gradient(#1c4aa8, #1e50b8);
}

.task-last {
    width: 131px;
    padding-left: 8px;
    gap: 4px;
}

.skype-s {
    width: 14px;
    font-size: 11px;
    text-align: center;
}

.lang {
    margin-left: auto;
    width: 19px;
    font-size: 10px;
}

.tray-out {
    display: flex;
    align-items: center;
    gap: 6px;
    width: 59px;
}

.tray {
    width: 137px;
    height: 25px;
    flex: none;
    display: flex;
    align-items: center;
    gap: 1px;
    box-sizing: border-box;
    background: linear-gradient(#1a8ef0, #1384e4 80%, #1068c4);
    border-left: 1px solid #0e3e8e;
}

.tray-back {
    width: 14px;
    height: 16px;
    flex: none;
    margin-left: -8px;
    display: flex;
    align-items: center;
    justify-content: center;
    border-radius: 50%;
    background-color: #e8f0fc;
}

.clock {
    margin-left: 3px;
    font-size: 9.4px;
    white-space: nowrap;
}
```
